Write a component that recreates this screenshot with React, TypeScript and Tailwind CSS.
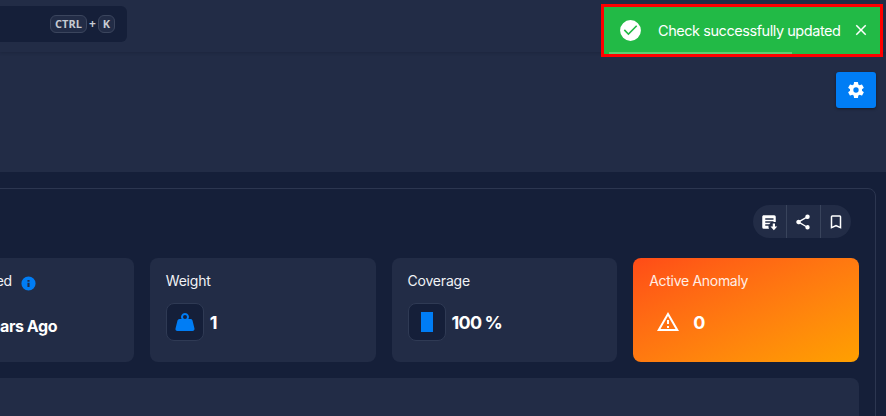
import type { ReactNode } from 'react';

function Icon({ d, className }: { d: string; className: string }) {
  return (
    <svg viewBox="0 0 24 24" fill="currentColor" className={`block shrink-0 ${className}`}>
      <path fillRule="evenodd" d={d} />
    </svg>
  );
}

const icons = {
  gear: 'M19.14 12.94c.04-.3.06-.61.06-.94 0-.32-.02-.64-.07-.94l2.03-1.58a.49.49 0 0 0 .12-.61l-1.92-3.32a.49.49 0 0 0-.59-.22l-2.39.96c-.5-.38-1.03-.7-1.62-.94l-.36-2.54a.48.48 0 0 0-.48-.41h-3.84c-.24 0-.43.17-.47.41l-.36 2.54c-.59.24-1.13.57-1.62.94l-2.39-.96a.48.48 0 0 0-.59.22L2.74 8.87c-.12.21-.08.47.12.61l2.03 1.58c-.05.3-.09.63-.09.94s.02.64.07.94l-2.03 1.58a.49.49 0 0 0-.12.61l1.92 3.32c.12.22.37.29.59.22l2.39-.96c.5.38 1.03.7 1.62.94l.36 2.54c.05.24.24.41.48.41h3.84c.24 0 .44-.17.47-.41l.36-2.54c.59-.24 1.13-.56 1.62-.94l2.39.96c.22.08.47 0 .59-.22l1.92-3.32a.48.48 0 0 0-.12-.61l-2.01-1.58zM12 15.2A3.2 3.2 0 1 1 12 8.8a3.2 3.2 0 0 1 0 6.4z',
  share: 'M18 16.08c-.76 0-1.44.3-1.96.77L8.91 12.7c.05-.23.09-.46.09-.7s-.04-.47-.09-.7l7.05-4.11c.54.5 1.25.81 2.04.81a3 3 0 1 0-3-3c0 .24.04.47.09.7L8.04 9.81A2.99 2.99 0 0 0 3 12a3 3 0 0 0 5.04 2.19l7.12 4.16c-.05.21-.08.43-.08.65A2.92 2.92 0 1 0 18 16.08z',
  bookmark: 'M17 3H7a2 2 0 0 0-2 2v16l7-3 7 3V5a2 2 0 0 0-2-2zm0 15-5-2.18L7 18V5h10v13z',
  note: 'M5 3h14a2 2 0 0 1 2 2v7.1a7 7 0 0 0-3-.1v-1H7v2h7.4A7 7 0 0 0 12.3 15H7v2h4.3A7 7 0 0 0 12 21H5a2 2 0 0 1-2-2V5c0-1.1.9-2 2-2zm2 4v2h11V7H7zM17 14h3v4h3l-4.5 5-4.5-5h3z',
  weight: 'M12 3a4 4 0 0 1 3.46 6h2.09c.95 0 1.76.67 1.95 1.6l1.98 8.01c.25 1.23-.69 2.39-1.95 2.39H4.47a2 2 0 0 1-1.95-2.39L4.5 10.6A2 2 0 0 1 6.45 9h2.09A4 4 0 0 1 12 3zm0 2a2 2 0 1 0 0 4 2 2 0 0 0 0-4z',
  warning: 'M12 5.99 19.53 19H4.47L12 5.99zM12 2 1 21h22L12 2zm-1 14h2v2h-2zm0-6h2v4h-2z',
  close: 'M19 6.41 17.59 5 12 10.59 6.41 5 5 6.41 10.59 12 5 17.59 6.41 19 12 13.41 17.59 19 19 17.59 13.41 12z',
  check: 'M12 2a10 10 0 1 0 0 20 10 10 0 0 0 0-20zm-2 14.5-4.5-4.5 1.1-1.1L10 14.3l7.4-7.4L18.5 8z',
  info: 'M12 2a10 10 0 1 0 0 20 10 10 0 0 0 0-20zm-1.5 9h3v6h-3zm0-4h3v2.5h-3z',
};

function IconTile({ children }: { children: ReactNode }) {
  return (
    <div className="flex size-[38px] items-center justify-center rounded-lg border border-[#2f3a54] bg-[#151f39] text-[#007df5]">
      {children}
    </div>
  );
}

function Card({ title, children }: { title: string; children: ReactNode }) {
  return (
    <section className="h-26 rounded-lg bg-[#222c46] px-4 pt-3.5 text-[#f0f2f5]">
      <h2 className="h-[18px] text-[14px] leading-[18px] tracking-[-0.2px]">{title}</h2>
      <div className="mt-[13px] flex items-center gap-1.5 text-[18px] font-bold text-white">{children}</div>
    </section>
  );
}

export default function App() {
  return (
    <div className="relative h-[416px] w-[886px] overflow-hidden bg-[#151f39] font-['Inter','Liberation_Sans',sans-serif] text-white">
      <header className="relative h-[52px] bg-[#222c46] pt-1.5 shadow-[0_1px_3px_rgba(15,23,42,0.3)]">
        <div className="flex h-9 w-[127px] items-center justify-end gap-[2px] rounded-r-md bg-[#151f39] pr-3 font-['Noto_Sans',sans-serif] text-[11px] font-bold text-[#c6cad2]">
          <kbd className="flex h-[18px] w-[37px] items-center justify-center rounded-md border border-[#3b455d] bg-[#222c46] font-['Open_Sans',sans-serif] text-[11px] font-bold">CTRL</kbd>
          <span className="flex w-[7px] justify-center text-[12px]">+</span>
          <kbd className="flex h-[18px] w-[17px] items-center justify-center rounded-md border border-[#3b455d] bg-[#222c46] font-['Open_Sans',sans-serif] text-[11px] font-bold">K</kbd>
        </div>
      </header>

      <div className="flex h-[120px] justify-end bg-[#222c46] pt-5 pr-2.5">
        <button className="flex h-9 w-10 items-center justify-center rounded-[3px] bg-[#007df5] pb-px shadow-[0_1px_3px_rgba(0,0,0,0.4)]">
          <Icon d={icons.gear} className="size-5" />
        </button>
      </div>

      <main className="mt-4 -ml-[109px] h-[300px] w-[985px] rounded-lg border border-[#2c3650] p-4">
        <div className="mr-2 flex justify-end">
          <div className="flex h-[33px] w-[98px] overflow-hidden rounded-full bg-[#222c46]">
            <button className="flex w-[33px] items-center justify-center pr-px"><Icon d={icons.note} className="size-[18px]" /></button>
            <button className="flex w-[35px] items-center justify-center border-x border-[#39445c] pr-px"><Icon d={icons.share} className="size-[18px]" /></button>
            <button className="flex w-[30px] items-center justify-center"><Icon d={icons.bookmark} className="size-[18px]" /></button>
          </div>
        </div>

        <div className="mt-5 grid grid-cols-4 gap-4">
          <section className="h-26 rounded-lg bg-[#222c46] pt-3.5 pl-4">
            <div className="flex h-[19px] w-[113px] items-center justify-end gap-2 text-[14px] leading-[18px] tracking-[-0.2px] whitespace-nowrap text-[#f0f2f5]">
              <span className="-mt-px">Last Asserted</span>
              <Icon d={icons.info} className="mt-1 size-[17px] text-[#007df5]" />
            </div>
            <p className="mt-[23px] w-[133px] text-right text-[16px] leading-6 font-bold tracking-[-0.45px] whitespace-nowrap">2 Years Ago</p>
          </section>
          <Card title="Weight">
            <IconTile><Icon d={icons.weight} className="size-6" /></IconTile>
            <span>1</span>
          </Card>
          <Card title="Coverage">
            <IconTile><span className="h-5 w-3 bg-[#007df5]" /></IconTile>
            <span className="tracking-[-0.7px]">100<span className="ml-[3px]">%</span></span>
          </Card>
          <section className="h-26 rounded-lg bg-linear-to-br from-[#ff4b17] to-[#ffa000] px-4 pt-3.5">
            <h2 className="h-[18px] text-[14px] leading-[18px] tracking-[-0.3px] text-[#ffeee5]">Active Anomaly</h2>
            <div className="mt-[13px] flex h-[38px] items-center pl-[7px] text-[18px] font-bold">
              <Icon d={icons.warning} className="size-6" />
              <span className="ml-[13px]">0</span>
            </div>
          </section>
        </div>
        <div className="mt-4 h-[60px] rounded-lg bg-[#222c46]" />
      </main>

      <div className="absolute top-[4px] left-[601px] flex h-[53px] w-[282px] items-center border-[3px] border-[#ff0000] bg-[#22ba46] pl-3.5">
        <Icon d={icons.check} className="-mt-px size-[25px]" />
        <span className="ml-[15px] w-[184px] text-[14.5px] tracking-[-0.45px] whitespace-nowrap">Check successfully updated</span>
        <button className="mb-[2px] ml-[10px]"><Icon d={icons.close} className="size-[18px]" /></button>
        <div className="absolute bottom-0 left-[5px] h-0.5 w-[183px] bg-[#5bce75]" />
      </div>
    </div>
  );
}
